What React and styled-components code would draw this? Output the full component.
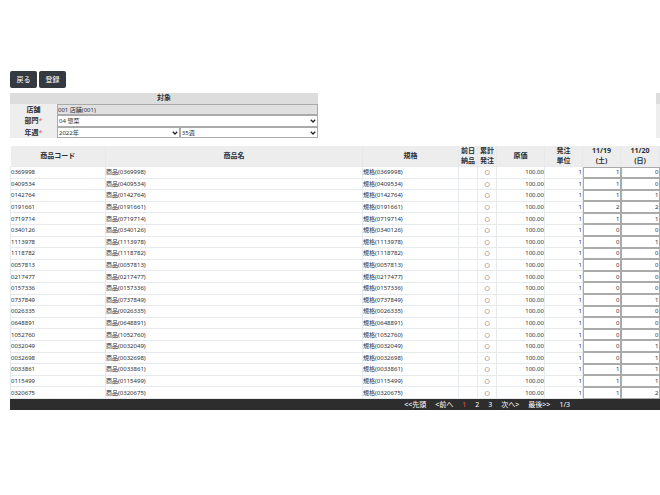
import React, { useState } from 'react';
import styled, { createGlobalStyle } from 'styled-components';

const ROWS = [
  ['0369998', 1, 0],
  ['0409534', 1, 0],
  ['0142764', 1, 1],
  ['0191661', 2, 2],
  ['0719714', 1, 1],
  ['0340126', 0, 0],
  ['1113978', 0, 1],
  ['1118782', 0, 0],
  ['0057813', 0, 0],
  ['0217477', 0, 0],
  ['0157336', 0, 0],
  ['0737849', 0, 1],
  ['0026335', 0, 0],
  ['0648891', 0, 0],
  ['1052760', 0, 0],
  ['0032049', 0, 1],
  ['0032698', 0, 1],
  ['0033861', 1, 1],
  ['0115499', 1, 1],
  ['0320675', 1, 2],
];

const SelectBox = ({ id, label, value, grow }) => (
  <SelectWrap $grow={grow}>
    <Select id={id} aria-label={label} defaultValue={value}>
      <option>{value}</option>
    </Select>
    <Arrow viewBox="0 0 6 4" aria-hidden="true">
      <path d="M0.8 0.8 L3 3 L5.2 0.8" fill="none" stroke="#222" strokeWidth="1.3" />
    </Arrow>
  </SelectWrap>
);

const OrderRow = ({ row }) => {
  const [code, first, second] = row;
  const [sat, setSat] = useState(first);
  const [sun, setSun] = useState(second);

  return (
    <tr>
      <Cell>{code}</Cell>
      <Cell>商品({code})</Cell>
      <Cell>規格({code})</Cell>
      <Cell />
      <Cell $align="center">
        <Mark>○</Mark>
      </Cell>
      <Cell $align="right">100.00</Cell>
      <Cell $align="right">1</Cell>
      <InputCell>
        <Quantity aria-label={`${code} 11/19`} value={sat} onChange={(e) => setSat(e.target.value)} />
      </InputCell>
      <InputCell>
        <Quantity aria-label={`${code} 11/20`} value={sun} onChange={(e) => setSun(e.target.value)} />
      </InputCell>
    </tr>
  );
};

const App = () => {
  return (
    <>
      <GlobalStyle />
      <Page>
        <Toolbar>
          <Button type="button">戻る</Button>
          <Button type="button">登録</Button>
        </Toolbar>
        <Conditions>
          <Target>
            <TargetTitle>対象</TargetTitle>
            <TargetLabel htmlFor="store">店舗</TargetLabel>
            <Store id="store" readOnly value="001 店舗(001)" />
            <TargetLabel htmlFor="section">
              部門<Required>*</Required>
            </TargetLabel>
            <SelectBox id="section" value="04 惣菜" grow={1} />
            <TargetLabel htmlFor="year">
              年週<Required>*</Required>
            </TargetLabel>
            <Pair>
              <SelectBox id="year" value="2022年" grow={8} />
              <SelectBox id="week" label="週" value="35週" grow={9} />
            </Pair>
          </Target>
          <SidePanel />
        </Conditions>
        <Orders>
          <colgroup>
            <Col $w={95} />
            <Col />
            <Col $w={96} />
            <Col $w={19} />
            <Col $w={19} />
            <Col $w={48} />
            <Col $w={38} />
            <Col $w={38} />
            <Col $w={39} />
          </colgroup>
          <thead>
            <tr>
              <Head>商品コード</Head>
              <Head>商品名</Head>
              <Head>規格</Head>
              <Head>前日<br />納品</Head>
              <Head>累計<br />発注</Head>
              <Head>原価</Head>
              <Head>発注<br />単位</Head>
              <Head>11/19<br />(土)</Head>
              <Head>11/20<br />(日)</Head>
            </tr>
          </thead>
          <tbody>
            {ROWS.map((row) => (
              <OrderRow key={row[0]} row={row} />
            ))}
          </tbody>
        </Orders>
        <Pager>
          <PageLink href="#first">&lt;&lt;先頭</PageLink>
          <PageLink href="#prev">&lt;前へ</PageLink>
          <PageLink href="#1" $current>1</PageLink>
          <PageLink href="#2">2</PageLink>
          <PageLink href="#3">3</PageLink>
          <PageLink href="#next">次へ&gt;</PageLink>
          <PageLink href="#last">最後&gt;&gt;</PageLink>
          <span>1/3</span>
        </Pager>
      </Page>
    </>
  );
};

export default App;

const GlobalStyle = createGlobalStyle`
  * {
    box-sizing: border-box;
  }

  body {
    margin: 0;
    background-color: #ffffff;
    color: #2b3035;
    font-family: 'Noto Sans', 'Noto Sans CJK JP', sans-serif;
    font-size: 6px;
    line-height: 10px;
  }

  button,
  input,
  select {
    font: inherit;
    color: inherit;
  }
`;

const Page = styled.main`
  padding: 71px 0 0 10px;
`;

const Toolbar = styled.div`
  display: flex;
  gap: 2px;
`;

const Button = styled.button`
  min-width: 27px;
  height: 17px;
  padding: 0 6px;
  border: none;
  border-radius: 2px;
  background-color: #343a40;
  color: #ffffff;
  font-size: 7px;
  cursor: pointer;
`;

const Conditions = styled.div`
  display: flex;
  justify-content: space-between;
  margin-top: 5px;
`;

const Target = styled.div`
  flex: 0 0 308px;
  display: grid;
  grid-template-columns: 47px 1fr;
  grid-template-rows: 11px 11px 12px 11px;
  background-color: #eeeeee;
`;

const TargetTitle = styled.div`
  grid-column: 1 / -1;
  background-color: #dddddd;
  font-size: 7px;
  font-weight: 700;
  text-align: center;
`;

const TargetLabel = styled.label`
  display: flex;
  align-items: center;
  justify-content: center;
  font-size: 7px;
  font-weight: 700;
`;

const Required = styled.span`
  color: #ff5050;
  font-weight: 400;
  line-height: 12px;
`;

const Store = styled.input`
  width: 100%;
  height: 100%;
  padding: 0;
  border: 1px solid #aaaaaa;
  background-color: #e0e0e0;
`;

const Pair = styled.div`
  display: flex;
`;

const SelectWrap = styled.div`
  position: relative;
  display: flex;
  flex: ${(props) => props.$grow} 1 0;
`;

const Select = styled.select`
  width: 100%;
  height: 100%;
  padding: 0 1px;
  border: 1px solid #aaaaaa;
  border-radius: 0;
  background-color: #ffffff;
  appearance: none;
`;

const Arrow = styled.svg`
  position: absolute;
  right: 2px;
  top: 4px;
  width: 6px;
  height: 4px;
  pointer-events: none;
`;

const SidePanel = styled.div`
  width: 4px;
  border-top: 11px solid #dddddd;
  background-color: #eeeeee;
`;

const Orders = styled.table`
  width: 100%;
  height: 253px;
  margin-top: 8px;
  border-collapse: collapse;
  table-layout: fixed;
`;

const Col = styled.col`
  width: ${(props) => (props.$w ? `${props.$w}px` : 'auto')};
`;

const Head = styled.th`
  height: 20px;
  padding: 0;
  border-right: 1px solid #e6e8ea;
  background-color: #ededed;
  font-size: 7px;
  font-weight: 700;
  line-height: 10px;
`;

const Cell = styled.td`
  height: 11px;
  padding: 0;
  border: 1px solid #e6eaed;
  line-height: 10px;
  text-align: ${(props) => props.$align || 'left'};
  white-space: nowrap;
`;

const InputCell = styled.td`
  height: 11px;
  padding: 0;
`;

const Mark = styled.span`
  font-family: 'DejaVu Sans', sans-serif;
`;

const Quantity = styled.input`
  display: block;
  width: 100%;
  height: 100%;
  padding: 0;
  border: 1px solid #aaaaaa;
  border-radius: 0;
  background-color: #ffffff;
  line-height: 9px;
  text-align: right;
`;

const Pager = styled.nav`
  display: flex;
  justify-content: flex-end;
  gap: 9px;
  padding-right: 90px;
  background-color: #2d2d2d;
  color: #ffffff;
  font-size: 7px;
  line-height: 11px;
`;

const PageLink = styled.a`
  color: ${(props) => (props.$current ? '#f05050' : 'inherit')};
  text-decoration: none;
`;
